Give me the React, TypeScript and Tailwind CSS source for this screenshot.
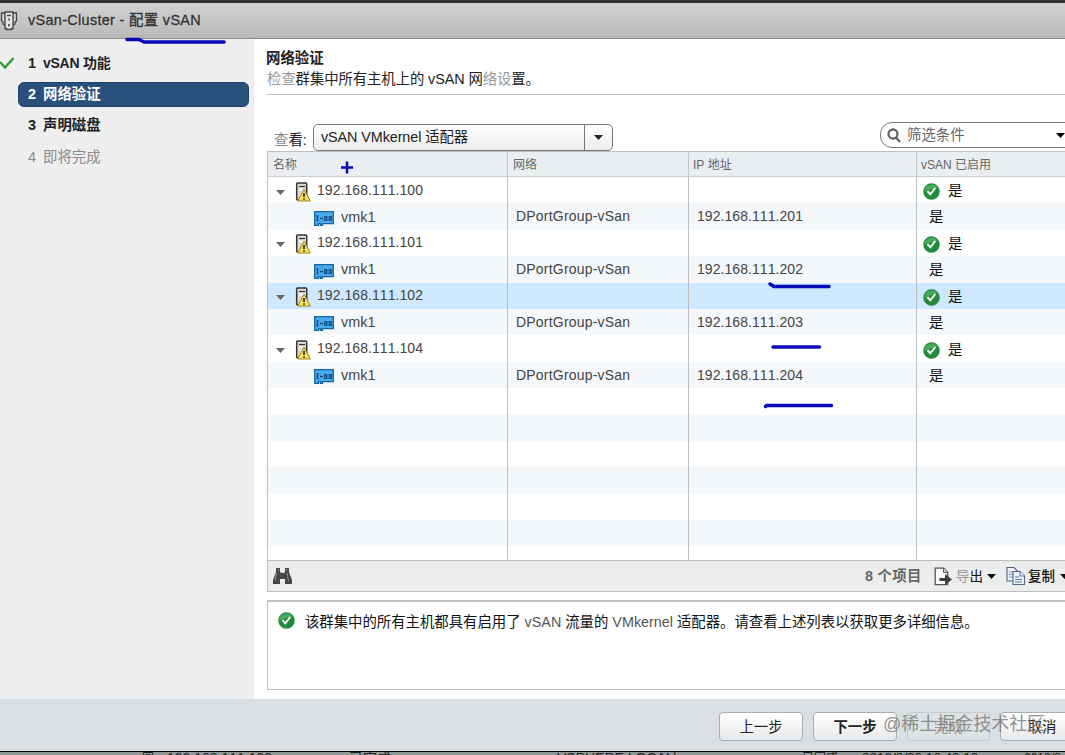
const steps = [
  { id: 1, name: "vSAN 功能", state: "done" },
  { id: 2, name: "网络验证", state: "active" },
  { id: 3, name: "声明磁盘", state: "next" },
  { id: 4, name: "即将完成", state: "disabled" },
]

const hosts = [
  { ip: "192.168.111.100", vmkIp: "192.168.111.201", selected: false },
  { ip: "192.168.111.101", vmkIp: "192.168.111.202", selected: false },
  { ip: "192.168.111.102", vmkIp: "192.168.111.203", selected: true },
  { ip: "192.168.111.104", vmkIp: "192.168.111.204", selected: false },
]

const emptyRows = [0, 1, 2, 3, 4, 5, 6]

const ClusterIcon = () => (
  <svg width="18" height="20" viewBox="0 0 18 20" className="shrink-0" fill="#d5d5d5" stroke="#444" strokeWidth="1.300">
    <path d="M1.500 2h4v12.500l-2.500-1.500v-2l-1.500-1z" />
    <path d="M12.500 2h4v8l-1.500 1v2l-2.500 1.500z" />
    <path d="M5 1h8v16.500h-1.500v1h-5v-1H5z" fill="#e6e6e6" />
    <path d="M7 4.500h4M9 7.500v2M9 13v2.500" strokeWidth="1.600" />
  </svg>
)

const OkIcon = () => (
  <svg width="17" height="17" viewBox="0 0 17 17" className="shrink-0">
    <circle cx="8.500" cy="8.500" r="8" fill="#218a3d" stroke="#3f8c50" strokeWidth=".6" />
    <path d="M1.500 9a7 7 0 0 1 13-4C10 5 6 7 1.500 9z" fill="#49aa5b" />
    <path d="M4.500 8.300l2.800 3L12.300 5" fill="none" stroke="#fff" strokeWidth="2" />
  </svg>
)

const HostIcon = () => (
  <svg width="16" height="20" viewBox="0 0 16 20" className="shrink-0">
    <rect x="1.700" y="1" width="10" height="17" rx="1" fill="#dedbd4" stroke="#333" strokeWidth="1.500" />
    <path d="M4 4.500h6" stroke="#333" strokeWidth="1.200" />
    <path d="M4 7.500h6" stroke="#fff" strokeWidth="1.500" />
    <path d="M9 7.200L15.300 19H2.700z" fill="#f6e35c" stroke="#9a8419" strokeWidth="1" strokeLinejoin="round" />
    <path d="M9 11v4M9 16.200v1.600" stroke="#222" strokeWidth="1.600" />
  </svg>
)

const NicIcon = () => (
  <svg width="20" height="15" viewBox="0 0 20 15" className="shrink-0">
    <path d="M.7.7h18.600v12H8.500v1.600h-2v-1.600h-2v1.600H.7z" fill="#48aaec" stroke="#15659f" strokeWidth="1.300" />
    <path d="M3.500 5v5M2.500 5h2M2.500 9.500h2M6 7.500h3" stroke="#134b7d" strokeWidth="1.300" />
    <path d="M10 5h3.500v5H10zM14.500 5H18v5h-3.500z" fill="#17578c" />
    <path d="M11.500 6.500v2M16 6.500v2" stroke="#3b8fcb" strokeWidth=".8" />
  </svg>
)

const BinocularsIcon = () => (
  <svg width="21" height="18" viewBox="0 0 21 18" className="shrink-0" fill="#474747">
    <path d="M4 1h4v4l1.500 1h2L13 5V1h4v4l3 8v4h-7v-5H8v5H1v-4l3-8z" />
    <path d="M4.700 6L3 14M15 6l1.500 8M6.500 2v2M14.500 2v2" stroke="#8a8a8a" strokeWidth="1" />
  </svg>
)

const ExportIcon = () => (
  <svg width="19" height="19" viewBox="0 0 19 19" className="shrink-0">
    <path d="M1.200 1.200h8.500l4 4v12.500H1.200z" fill="#fafafa" stroke="#555" strokeWidth="1.300" />
    <path d="M9.500 1.200v4.200h4.200" fill="#ddd" stroke="#555" />
    <path d="M5.500 11H11V7l7 5.500-7 5.500v-4H5.500z" fill="#3d3d3d" />
  </svg>
)

const CopyIcon = () => (
  <svg width="20" height="20" viewBox="0 0 20 20" fill="#edf3fb" stroke="#4f6685" strokeWidth="1.100">
    <path d="M1 1.500h7l3 3V15H1z" />
    <path d="M3 6h5M3 8.500h4M3 11h4" stroke="#7f9cc1" />
    <path d="M7 5.500h7l4.500 4.500v8.500H7z" />
    <path d="M14 5.500V10h4.500M9 11h4M9 13.500h7M9 16h7" stroke="#5c7eab" />
  </svg>
)

const Caret = ({ className = "" }) => (
  <svg width="9" height="5" viewBox="0 0 9 5" className={"shrink-0 " + className} fill="currentColor">
    <path d="M0 0h9L4.500 5z" />
  </svg>
)

// hand drawn pen marks over the dialog
const PenMarks = () => (
  <svg width="1065" height="755" className="absolute left-0 top-0 pointer-events-none" fill="none" stroke="#0808b8" strokeWidth="3.500" strokeLinecap="round" strokeLinejoin="round">
    <path d="M127 39.500h12l5 2.500h80" />
    <path d="M341 167.500h12M347 161.500v12" strokeWidth="2.500" strokeLinecap="butt" />
    <path d="M770 284l4 2.500h55" />
    <path d="M773 347h46.500" />
    <path d="M765.500 406.500l1-1h65" />
  </svg>
)

const Row = ({ bg, children }: any) => (
  <div className={"grid grid-cols-[240px_181px_228px_1fr] h-[26.4px] shrink-0 " + bg}>{children}</div>
)

const App = () => {
  return (
    <main className="relative w-[1065px] h-[755px] overflow-hidden flex flex-col bg-white text-[14.4px] text-[#222] whitespace-nowrap [font-kerning:none] font-['Liberation_Sans','Noto_Sans_CJK_SC',sans-serif]">
      <div className="h-[3px] shrink-0 bg-[#303333]" />

      {/* Title bar */}
      <header className="h-9 shrink-0 flex items-center gap-2.5 bg-linear-to-b from-[#d2d2d2] to-[#b9b9b9] border-b border-[#8d8d8d] text-[#333] [-webkit-text-stroke:0.3px]">
        <ClusterIcon />
        <h1 className="text-[14.4px] tracking-[0.34px]">vSan-Cluster - 配置 vSAN</h1>
      </header>

      <div className="h-[660px] shrink-0 flex">
        {/* Wizard steps */}
        <nav className="w-[254px] shrink-0 bg-[#eeeeee] pt-[11.5px]">
          {steps.map((s) => (
            <div
              key={s.id}
              className={
                "relative flex items-center ml-[18px] w-[231px] pl-[9px] pt-px h-[25px] mb-[6.4px] rounded-md border " +
                (s.state === "active"
                  ? "bg-[#294f7b] border-[#214268] text-white font-bold"
                  : s.state === "disabled"
                  ? "border-transparent text-[#8b8b8b]"
                  : "border-transparent text-[#222] font-bold")
              }
            >
              {s.state === "done" && (
                <svg width="16" height="12" viewBox="0 0 16 12" className="absolute -left-5 top-[5px]" fill="none" stroke="#36963e" strokeWidth="2.400">
                  <path d="M1 5l5 5.500L14.500 1" />
                </svg>
              )}
              <span className="w-[15px]">{s.id}</span>
              <span className={s.state === "done" ? "text-[14px] tracking-[-0.25px]" : "text-[14.4px]"}>{s.name}</span>
            </div>
          ))}
        </nav>

        <section className="flex-1 min-w-0 pl-[13px] flex flex-col">
          <h2 className="-ml-px mt-[9px] h-[21px] leading-5 font-bold">网络验证</h2>
          <p className="h-[21px] leading-[21px] tracking-[-0.1px]">
            <span className="text-[#999]">检查</span>群集中所有主机上的 vSAN 网<span className="text-[#999]">络设</span>置。
          </p>
          <div className="mt-1 h-px bg-[#c5c5c5]" />

          {/* Toolbar */}
          <div className="mt-[29px] h-[27px] flex">
            <span className="w-[46px] shrink-0 pl-[7px] pt-1.5"><span className="text-[#888]">查</span>看:</span>
            <div className="w-[300px] h-[27px] shrink-0 flex rounded-[5px] border border-[#777] bg-linear-to-b from-white to-[#ededed]">
              <span className="flex-1 pl-[7px] leading-6 tracking-[-0.1px]">vSAN VMkernel 适配器</span>
              <span className="w-[28px] border-l border-[#777] flex items-center justify-center text-[#222]"><Caret /></span>
            </div>
            <div className="ml-[267px] -mt-0.5 w-[200px] h-[26px] shrink-0 flex items-center rounded-l-xl border border-[#777] pl-1.5 text-[#666]">
              <svg width="14" height="15" viewBox="0 0 14 15" fill="none" stroke="#666" strokeWidth="2.300">
                <circle cx="6" cy="6" r="4.500" />
                <path d="M9 9.500l4 4.500" />
              </svg>
              <span className="ml-1.5 pt-0.5">筛选条件</span>
              <Caret className="ml-[91px] text-black" />
            </div>
          </div>

          {/* Adapter table */}
          <div className="h-[441px] shrink-0 flex flex-col border-l border-t border-b border-[#bdc0c3] overflow-hidden">
            <div className="h-[25px] shrink-0 grid grid-cols-[240px_181px_228px_1fr] bg-[#ebeef0] border-b border-[#c8cccf] text-[12px] leading-[26px] text-[#666]">
              <span className="pl-[5px] border-r border-[#c3c7ca]">名称</span>
              <span className="pl-[5px] border-r border-[#c3c7ca]">网络</span>
              <span className="pl-1 border-r border-[#c3c7ca]">IP 地址</span>
              <span className="pl-1">vSAN 已启用</span>
            </div>
            <div className="flex-1 min-h-0 flex flex-col overflow-hidden text-[#444]">
              {hosts.map((h) => (
                <div key={h.ip} className="shrink-0">
                  <Row bg={h.selected ? "bg-[#cee8ff]" : "bg-white"}>
                    <div className="flex items-center pl-2 border-r border-[#bbbfc3]">
                      <Caret className="mt-1 text-[#666]" />
                      <span className="ml-2.5 pt-[3px]"><HostIcon /></span>
                      <span className="ml-1.5 text-[14px] tracking-[0.06px]">{h.ip}</span>
                    </div>
                    <div className="border-r border-[#bbbfc3]" />
                    <div className="border-r border-[#bbbfc3]" />
                    <div className="flex items-center pl-1.5 pt-[3px] gap-2 text-[#111]">
                      <OkIcon />
                      <span className="pt-px">是</span>
                    </div>
                  </Row>
                  <Row bg="bg-[#f4f8fb]">
                    <div className="flex items-center pl-[46px] border-r border-[#bbbfc3]">
                      <span className="pt-0.5"><NicIcon /></span>
                      <span className="ml-[7px]">vmk1</span>
                    </div>
                    <div className="pl-2 leading-[26px] text-[14px] tracking-[0.2px] border-r border-[#bbbfc3]">DPortGroup-vSan</div>
                    <div className="pl-2 leading-[26px] text-[14px] tracking-[0.06px] border-r border-[#bbbfc3]">{h.vmkIp}</div>
                    <div className="pl-3 leading-[28px] text-[#111]">是</div>
                  </Row>
                </div>
              ))}
              {emptyRows.map((i) => (
                <Row key={i} bg={i % 2 === 0 ? "bg-white" : "bg-[#f4f8fb]"}>
                  <div className="border-r border-[#bbbfc3]" />
                  <div className="border-r border-[#bbbfc3]" />
                  <div className="border-r border-[#bbbfc3]" />
                </Row>
              ))}
            </div>
            <div className="h-[31px] shrink-0 flex items-center bg-[#eceded] border-t border-[#bdbdbd] pl-1">
              <BinocularsIcon />
              <span className="ml-[572px] w-[69px] shrink-0 pt-0.5 font-bold text-[#666] tracking-[0.3px]">8 个项目</span>
              <ExportIcon />
              <span className="ml-[3px] shrink-0 pt-0.5 text-[#111] text-[13.5px]"><span className="text-[#999]">导</span>出</span>
              <Caret className="ml-1 text-[#111]" />
              <span className="ml-2.5 shrink-0"><CopyIcon /></span>
              <span className="ml-0.5 shrink-0 pt-0.5 text-[#111] text-[13.5px] font-medium">复制</span>
              <Caret className="ml-[5px] text-[#111]" />
            </div>
          </div>

          {/* Validation message */}
          <div className="mt-2 h-[90px] shrink-0 flex items-start border-2 border-r-0 border-[#bfbfbf] border-l border-b pl-2.5 pt-2.5 text-[#111]">
            <OkIcon />
            <p className="ml-2.5 leading-5 tracking-[-0.02px]">
              该群集中的所有主机都具有启用了 <span className="text-[#555]">vSAN</span> 流量的 <span className="text-[#555]">VMkernel</span> 适配器。请查看上述列表以获取更多详细信息。
            </p>
          </div>
        </section>
      </div>

      {/* Wizard buttons */}
      <footer className="h-[52px] shrink-0 flex items-start pt-[13px] pl-[719px] gap-2.5 bg-[#d9dfe2] text-[#222]">
        <button className="w-[84px] h-[29px] shrink-0 rounded border border-[#a9adb0] bg-linear-to-b from-white to-[#e9e9e9] pt-0.5">上一步</button>
        <button className="w-[84px] h-[29px] shrink-0 rounded border border-[#a9adb0] bg-linear-to-b from-white to-[#e9e9e9] pt-0.5 font-bold">下一步</button>
        <button className="w-[83px] h-[29px] shrink-0 rounded border border-[#c5cacd] bg-[#dde2e4] pt-0.5 text-[#999]">完成</button>
        <button className="w-[84px] h-[29px] shrink-0 rounded border border-[#a9adb0] bg-linear-to-b from-white to-[#e9e9e9] pt-0.5">取消</button>
      </footer>

      {/* Page behind the dialog, only its top edge is visible */}
      <div className="h-1 shrink-0 flex overflow-hidden bg-[#8f9896] border-t border-black text-xs leading-3 text-[#222]">
        <span className="ml-[142px] w-[25px]">回</span>
        <span className="w-[182px] text-[14px] leading-3">192.168.111.100</span>
        <span className="w-[208px] text-[14px]">已完成</span>
        <span className="w-[245px] text-[14px]">VSPHERE.LOCAL\</span>
        <span className="w-[60px]">已完成</span>
        <span className="w-[162px] text-[13.5px]">2018/8/20 16:43:13</span>
        <span>2018/8</span>
      </div>

      <span className="absolute left-[883px] top-[712px] text-[18px] leading-6 text-[#777]/80">@稀土掘金技术社区</span>
      <PenMarks />
    </main>
  )
}

export default App
